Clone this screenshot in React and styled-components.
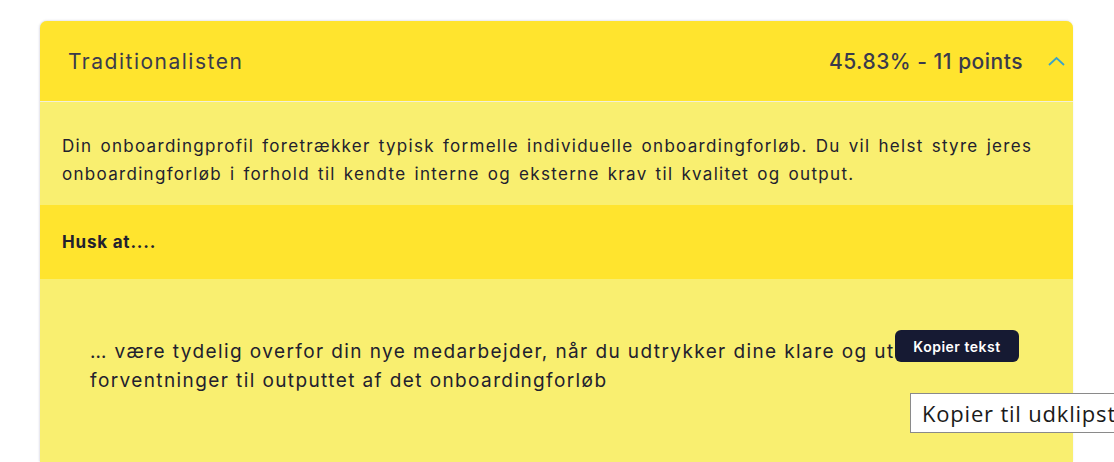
import React from 'react'
import styled, {createGlobalStyle} from 'styled-components'

const Global = createGlobalStyle`
  html, body {
    margin: 0;
    padding: 0;
    background: #ffffff;
    overflow: hidden;
  }
  body {
    font-family: Inter, "Noto Sans", sans-serif;
  }
`

const Page = styled.div`
  width: 1114px;
  height: 462px;
  padding: 21px 41px 0 40px;
  box-sizing: border-box;
  position: relative;
  overflow: hidden;
`

const Card = styled.section`
  border-radius: 7px 7px 0 0;
  overflow: hidden;
  box-shadow: -1px 0 2px rgba(120, 120, 160, 0.18), 0 -1px 2px rgba(120, 120, 160, 0.12);
  height: 100%;
  background: #f9ef70;
`

const Header = styled.header`
  display: flex;
  align-items: center;
  height: 80px;
  padding: 0 7px 0 28px;
  background: #ffe42e;
  border-bottom: 1px solid #f3f0d8;
  color: #3a3a4c;
  font-size: 21px;
`

const Title = styled.h2`
  margin: 0;
  font-size: inherit;
  font-weight: 400;
  letter-spacing: 1.5px;
  flex: 1;
`

const Score = styled.span`
  font-weight: 500;
  letter-spacing: 0.5px;
  margin-right: 24px;
`

const Chevron = styled.svg`
  width: 19px;
  height: 12px;
  color: #3aa3c8;
`

const Lead = styled.p`
  margin: 0;
  padding: 30px 22px 17px 22px;
  font-size: 17px;
  line-height: 28px;
  letter-spacing: 1.3px;
  word-spacing: 2px;
  color: #22212e;
`

const SubHeader = styled.h3`
  margin: 0;
  height: 74px;
  display: flex;
  align-items: center;
  padding: 0 22px;
  background: #ffe42e;
  font-size: 17px;
  font-weight: 700;
  letter-spacing: 0.8px;
  color: #22212e;
`

const Quote = styled.blockquote`
  margin: 0;
  padding: 58px 60px 0 50px;
  position: relative;
  font-size: 19px;
  line-height: 29px;
  letter-spacing: 1.4px;
  color: #22212e;
`

const CopyButton = styled.button`
  position: absolute;
  top: 51px;
  left: 855px;
  height: 32px;
  width: 124px;
  padding: 0;
  border: none;
  border-radius: 6px;
  background: #161a33;
  color: #ffffff;
  font-family: Inter, sans-serif;
  font-size: 14px;
  font-weight: 600;
  letter-spacing: 0.5px;
`

const NativeTip = styled.div`
  position: absolute;
  top: 393px;
  left: 910px;
  height: 40px;
  box-sizing: border-box;
  padding: 0 11px;
  display: flex;
  align-items: center;
  background: #ffffff;
  border: 1px solid #8a8a8a;
  font-family: "Open Sans", sans-serif;
  font-size: 22px;
  letter-spacing: 0.8px;
  color: #1a1a1a;
  white-space: nowrap;
`

export default function App() {
  return (
    <Page>
      <Global />
      <Card>
        <Header>
          <Title>Traditionalisten</Title>
          <Score>45.83% - 11 points</Score>
          <Chevron viewBox="0 0 19 12" fill="none">
            <path d="M2 10 L9.5 3 L17 10" stroke="currentColor" strokeWidth="1.8" />
          </Chevron>
        </Header>
        <Lead>
          Din onboardingprofil foretrækker typisk formelle individuelle onboardingforløb. Du vil helst styre jeres onboardingforløb i forhold til kendte interne og eksterne krav til kvalitet og output.
        </Lead>
        <SubHeader>Husk at....</SubHeader>
        <Quote>
          … være tydelig overfor din nye medarbejder, når du udtrykker dine klare og utvetydige forventninger til outputtet af det onboardingforløb
          <CopyButton>Kopier tekst</CopyButton>
        </Quote>
      </Card>
      <NativeTip>Kopier til udklipstavle</NativeTip>
    </Page>
  )
}
